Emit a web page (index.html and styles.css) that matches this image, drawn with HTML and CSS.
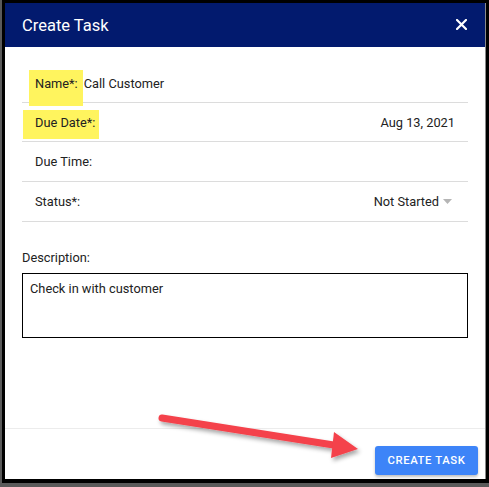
FILE: index.html
```html
<!DOCTYPE html>
<html>
<head>
<meta charset="utf-8">
<link rel="stylesheet" href="styles.css">
</head>
<body>
<div class="frame">
  <div class="dialog">
    <div class="header">
      <span class="title">Create Task</span>
      <svg class="close" width="11" height="11" viewBox="0 0 11 11"><path d="M1 1L10 10M10 1L1 10" stroke="#fff" stroke-width="2.2" stroke-linecap="square"/></svg>
    </div>
    <div class="content">
      <div class="row">
        <span class="label hl hl-name">Name*:</span>
        <span class="inline-value">Call Customer</span>
      </div>
      <div class="row">
        <span class="label hl hl-date">Due Date*:</span>
        <span class="value">Aug 13, 2021</span>
      </div>
      <div class="row">
        <span class="label">Due Time:</span>
      </div>
      <div class="row">
        <span class="label">Status*:</span>
        <span class="value select">Not Started <svg class="caret" width="9" height="5" viewBox="0 0 9 5"><path d="M0 0H9L4.5 5Z" fill="#b5b5b5"/></svg></span>
      </div>
      <div class="desc-label">Description:</div>
      <div class="desc-box">Check in with customer</div>
    </div>
    <div class="footer">
      <button class="btn">CREATE TASK</button>
    </div>
  </div>
</div>
<svg class="arrow" width="489" height="487" viewBox="0 0 489 487">
  <defs>
    <filter id="sh" x="-20%" y="-50%" width="140%" height="200%">
      <feDropShadow dx="2" dy="3" stdDeviation="2" flood-color="#000" flood-opacity="0.35"/>
    </filter>
  </defs>
  <g filter="url(#sh)">
    <line x1="162" y1="418" x2="340" y2="446" stroke="#f4424b" stroke-width="7" stroke-linecap="round"/>
    <polygon points="334,432 358,449 331,458" fill="#f4424b"/>
  </g>
</svg>
</body>
</html>
```

FILE: styles.css
```css
html, body {
  margin: 0;
  padding: 0;
}
body {
  background: #5a5a5a;
  width: 489px;
  height: 487px;
  position: relative;
  overflow: hidden;
  font-family: Roboto, "Liberation Sans", sans-serif;
}
.frame {
  margin-left: 2px;
  width: 487px;
  height: 483px;
  background: #000;
  padding: 3px 2px 4px 3px;
  box-sizing: border-box;
}
.dialog {
  width: 480px;
  height: 476px;
  background: #fff;
  display: flex;
  flex-direction: column;
  border-right: 1px solid #8a8a8a;
}
.header {
  height: 44px;
  flex: none;
  background: #021a6e;
  display: flex;
  align-items: center;
  justify-content: space-between;
  padding: 0 18px 0 17px;
}
.title {
  color: #fff;
  font-size: 16.5px;
  position: relative;
  top: 0;
}
.close {
  display: block;
  margin-top: -1px;
}
.content {
  flex: 1;
  padding: 17px 17px 0 17px;
  font-size: 12.8px;
  color: #222;
}
.row {
  height: 39px;
  box-sizing: border-box;
  border-bottom: 1px solid #dcdcdc;
  display: flex;
  align-items: center;
  padding: 0 13px;
}
.row:nth-child(3), .row:nth-child(4) {
  height: 40px;
}
.label {
  position: relative;
}
.hl::before {
  content: "";
  position: absolute;
  background: #fff45e;
  z-index: -1;
}
.dialog, .content, .row { position: relative; z-index: 0; }
.hl-name::before {
  left: -6px;
  right: -5px;
  top: -6px;
  bottom: -15px;
}
.hl-date::before {
  left: -12px;
  right: -4px;
  top: -5px;
  bottom: -9px;
}
.inline-value {
  margin-left: 6px;
}
.value {
  margin-left: auto;
}
.select {
  margin-right: 3px;
  display: flex;
  align-items: center;
  gap: 4px;
}
.caret {
  display: block;
}
.desc-label {
  margin-top: 28px;
  line-height: 15px;
}
.desc-box {
  margin-top: 8px;
  height: 65px;
  box-sizing: border-box;
  border: 1px solid #000;
  padding: 7px 7px;
  line-height: 15px;
}
.footer {
  flex: none;
  height: 51px;
  box-sizing: border-box;
  border-top: 1px solid #ececec;
  display: flex;
  justify-content: flex-end;
  align-items: flex-start;
  padding: 17px 7px 0 0;
}
.btn {
  width: 103px;
  height: 29px;
  border: none;
  border-radius: 3px;
  background: #3d84f8;
  color: #fff;
  font-family: Roboto, "Liberation Sans", sans-serif;
  font-size: 11.3px;
  font-weight: 500;
  letter-spacing: 0.6px;
  box-shadow: 0 2px 3px rgba(0,0,0,0.25);
  padding: 0;
}
.arrow {
  position: absolute;
  left: 0;
  top: 0;
  pointer-events: none;
}
```
